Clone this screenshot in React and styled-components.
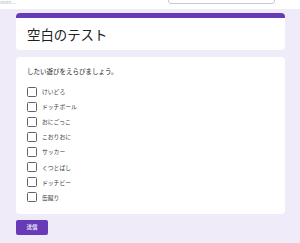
import React from 'react';
import styled, { createGlobalStyle } from 'styled-components';

const GlobalStyle = createGlobalStyle`
  body {
    margin: 0;
    background: #f0ebf8;
    font-family: "Noto Sans CJK JP", "Noto Sans", sans-serif;
  }
`;

const Page = styled.div`
  width: 300px;
  height: 243px;
  overflow: hidden;
  background: #f0ebf8;
`;

const TopStrip = styled.div`
  height: 9px;
  background: #ffffff;
  display: flex;
  align-items: flex-end;
  padding-bottom: 5px;
  box-sizing: border-box;
  overflow: hidden;
`;

const CutText = styled.span`
  font-size: 5px;
  line-height: 5px;
  color: #b4b8bc;
  width: 168px;
  white-space: nowrap;
`;

const CutBox = styled.div`
  width: 107px;
  height: 20px;
  flex-shrink: 0;
  border: 1px solid #c8c8c8;
  border-radius: 3px;
  box-sizing: border-box;
`;

const Main = styled.main`
  padding: 4px 15px 0 16px;
  display: flex;
  flex-direction: column;
  gap: 7px;
`;

const Card = styled.section`
  background: #ffffff;
  border-radius: 4px;
  box-sizing: border-box;
  border-top: ${p => (p.accent ? '5px solid #673ab7' : 'none')};
`;

const Title = styled.h1`
  margin: 0;
  height: 32px;
  display: flex;
  align-items: center;
  padding-left: 11px;
  font-size: 13.4px;
  font-weight: 400;
  color: #202124;
`;

const Question = styled.div`
  padding: 9px 11px 9px;
`;

const QuestionText = styled.p`
  margin: 0 0 8px;
  font-size: 6.5px;
  line-height: 10px;
  color: #202124;
`;

const Options = styled.div`
  display: flex;
  flex-direction: column;
`;

const Option = styled.label`
  display: flex;
  align-items: center;
  gap: 5px;
  height: 15.1px;
`;

const Box = styled.span`
  width: 8px;
  height: 8px;
  border: 1px solid #5f6368;
  border-radius: 1.5px;
  flex-shrink: 0;
`;

const OptionText = styled.span`
  font-size: 5.8px;
  color: #3c4043;
`;

const Actions = styled.div`
  display: flex;
  margin-top: -1px;
`;

const Submit = styled.button`
  width: 32px;
  height: 15px;
  padding: 0;
  border: none;
  border-radius: 2px;
  background: #673ab7;
  color: #ffffff;
  font-family: inherit;
  font-size: 5.5px;
  font-weight: 500;
  cursor: pointer;
`;

const choices = [
  'けいどろ',
  'ドッチボール',
  'おにごっこ',
  'こおりおに',
  'サッカー',
  'くつとばし',
  'ドッチビー',
  '缶蹴り',
];

export default function App() {
  return (
    <Page>
      <GlobalStyle />
      <TopStrip>
        <CutText>ason...</CutText>
        <CutBox />
      </TopStrip>
      <Main>
        <Card accent>
          <Title>空白のテスト</Title>
        </Card>
        <Card>
          <Question>
            <QuestionText>したい遊びをえらびましょう。</QuestionText>
            <Options>
              {choices.map(c => (
                <Option key={c}>
                  <Box />
                  <OptionText>{c}</OptionText>
                </Option>
              ))}
            </Options>
          </Question>
        </Card>
        <Actions>
          <Submit>送信</Submit>
        </Actions>
      </Main>
    </Page>
  );
}
